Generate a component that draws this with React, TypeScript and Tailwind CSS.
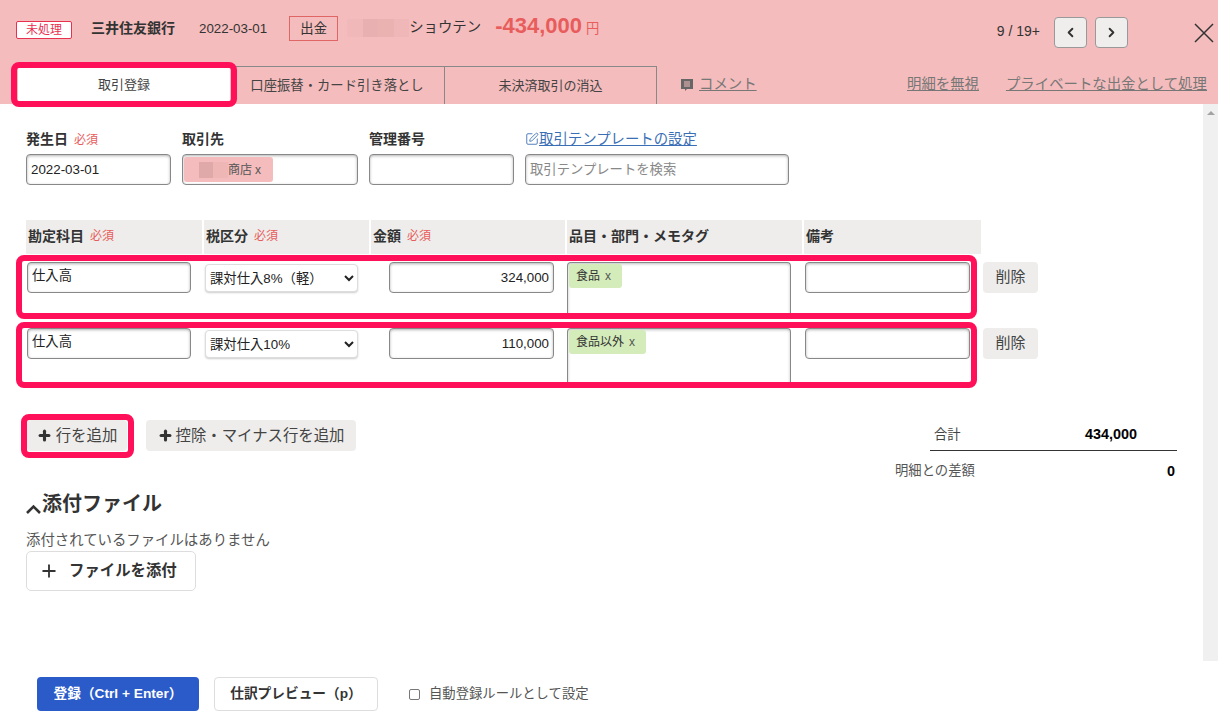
import { ChevronLeft, ChevronRight, Plus, SquarePen } from "lucide-react";

const font = '"Liberation Sans", "Noto Sans CJK JP", sans-serif';

const field =
  "h-[31px] rounded-[4px] border border-[#888] bg-white px-[4px] text-[13.33px] text-[#222] shadow-[inset_0_1px_3px_rgba(0,0,0,0.3)] outline-none";

function Required() {
  return <span className="ml-[6px] text-[12px] font-normal text-[#e85c5c]">必須</span>;
}

function Highlight({ className }: { className: string }) {
  return (
    <div
      className={`pointer-events-none absolute rounded-[8px] border-[6px] border-[#ff1059] ${className}`}
    />
  );
}

function Mosaic({ colors, width, height }: { colors: string[]; width: number; height: number }) {
  return (
    <span className="flex shrink-0" style={{ width, height }}>
      {colors.map((c, i) => (
        <span key={i} className="flex-1" style={{ backgroundColor: c }} />
      ))}
    </span>
  );
}

function Header() {
  return (
    <div className="h-[104px] shrink-0 bg-[#f4bcbc] text-[#333]">
      <div className="flex h-[66px] items-start">
        <div className="ml-[16px] mt-[21px] flex h-[18px] w-[56px] items-center justify-center rounded-[2px] border border-[#e8304f] bg-white text-[12px] text-[#e8304f]">
          未処理
        </div>
        <div className="ml-[19px] mt-[18px] text-[14px] font-bold leading-[20px] text-[#333]">三井住友銀行</div>
        <div className="ml-[24px] mt-[20px] text-[13.33px] leading-[17px]">2022-03-01</div>
        <div className="ml-[22px] mt-[16px] flex h-[25px] w-[49px] items-center justify-center border border-[#e06666] text-[13.33px]">
          出金
        </div>
        <div className="ml-[9px] mt-[18px] flex h-[20px] items-center">
          <Mosaic colors={["#f0b8b8", "#e8b0b0", "#ebb2b2", "#efb7b7"]} width={62} height={18} />
          <span className="text-[14.4px]">ショウテン</span>
        </div>
        <div className="ml-[14px] mt-[12px] text-[22px] font-bold leading-[28px] text-[#e85c5c]">-434,000</div>
        <div className="ml-[4px] mt-[20px] text-[13.33px] leading-[17px] text-[#e85c5c]">円</div>
        <div className="ml-auto mt-[23px] text-[14px] leading-[17px]">9 / 19+</div>
        <button className="ml-[14px] mt-[17px] flex h-[31px] w-[33px] items-center justify-center rounded-[4px] border border-[#999] bg-[#f0eeec]">
          <ChevronLeft size={15} strokeWidth={3} />
        </button>
        <button className="ml-[8px] mt-[17px] flex h-[31px] w-[33px] items-center justify-center rounded-[4px] border border-[#999] bg-[#f0eeec]">
          <ChevronRight size={15} strokeWidth={3} />
        </button>
        <svg className="ml-[66px] mr-[4px] mt-[23px]" width="20" height="20" viewBox="0 0 20 20">
          <path d="M1 1L19 19M19 1L1 19" stroke="#333" strokeWidth="1.5" fill="none" />
        </svg>
      </div>
      <div className="relative flex h-[38px] items-stretch text-[13.33px] text-[#444]">
        <div className="ml-[18px] flex w-[212px] items-center justify-center bg-white text-[13px]">取引登録</div>
        <div className="flex w-[214px] items-center justify-center border-t border-[#888]">口座振替・カード引き落とし</div>
        <div className="flex w-[213px] items-center justify-center border-x border-t border-[#888] text-[13px]">
          未決済取引の消込
        </div>
        <div className="ml-[24px] flex items-center gap-[6px] text-[#777]">
          <svg width="12" height="12" viewBox="0 0 12 12">
            <path d="M0 0h12v10H6l-2 2v-2H0z" fill="#666" />
            <path d="M3 3h6M3 5h6M3 7h6" stroke="#f4bcbc" strokeWidth="1" />
          </svg>
          <span className="text-[14.4px] underline">コメント</span>
        </div>
        <div className="ml-auto flex items-center gap-[27px] pr-[11px] text-[14.4px] text-[#777] underline">
          <span>明細を無視</span>
          <span>プライベートな出金として処理</span>
        </div>
        <Highlight className="left-[11px] top-[-4px] h-[45px] w-[226px]" />
      </div>
    </div>
  );
}

function TopFields() {
  return (
    <div className="mt-[26px] flex gap-[11px]">
      <div className="w-[145px]">
        <div className="mb-[6px] h-[18px] text-[14px] font-bold leading-[18px]">
          発生日
          <Required />
        </div>
        <input className={`${field} w-full`} defaultValue="2022-03-01" />
      </div>
      <div className="w-[176px]">
        <div className="mb-[6px] h-[18px] text-[14px] font-bold leading-[18px]">取引先</div>
        <div className={`${field} flex w-full items-center !px-[1px]`}>
          <div className="flex h-[25px] w-[89px] items-center rounded-[3px] bg-[#f4bcbc] text-[12px] text-[#555]">
            <Mosaic colors={["#f4bcbc", "#dfa9a9", "#efb6b6"]} width={44} height={16} />
            <span>商店</span>
            <span className="ml-[3px]">x</span>
          </div>
        </div>
      </div>
      <div className="w-[145px]">
        <div className="mb-[6px] h-[18px] text-[14px] font-bold leading-[18px]">管理番号</div>
        <input className={`${field} w-full`} />
      </div>
      <div className="w-[264px]">
        <div className="mb-[6px] flex h-[18px] items-center text-[14.4px] leading-[18px] text-[#3b6fb5] underline">
          <SquarePen size={14} strokeWidth={1.5} />
          取引テンプレートの設定
        </div>
        <input className={`${field} w-full placeholder:text-[#888]`} placeholder="取引テンプレートを検索" />
      </div>
    </div>
  );
}

const headers = [
  { label: "勘定科目", width: "w-[176px]", required: true },
  { label: "税区分", width: "w-[165px]", required: true },
  { label: "金額", width: "w-[194px]", required: true },
  { label: "品目・部門・メモタグ", width: "w-[235px]", required: false },
  { label: "備考", width: "w-[177px]", required: false },
];

function Row({ tax, amount, tag, first }: { tax: string; amount: string; tag: string; first: boolean }) {
  return (
    <div className="relative flex h-[66px] items-start pl-[1px] pt-[6px]">
      <input className={`${field} w-[164px] pb-[6px]`} defaultValue="仕入高" />
      <select
        className="ml-[14px] mt-[2px] h-[28px] w-[153px] rounded-[4px] border border-[#ddd] bg-white text-[13.33px] text-[#222] shadow-[0_1px_2px_rgba(0,0,0,0.2)]"
        defaultValue={tax}
      >
        <option>{tax}</option>
      </select>
      <input className={`${field} ml-[31px] w-[165px] text-right`} defaultValue={amount} />
      <div className="ml-[13px] h-[56px] w-[224px] rounded-t-[4px] border border-b-0 border-[#888] bg-white pl-[1px] pt-[1px] shadow-[inset_0_1px_3px_rgba(0,0,0,0.25)]">
        <div className="flex h-[24px] w-fit items-center rounded-[3px] bg-[#d3ecba] pl-[7px] pr-[11px] text-[12px] text-[#555]">
          <span className="text-[#333]">{tag}</span>
          <span className="ml-[5px]">x</span>
        </div>
      </div>
      <input className={`${field} ml-[14px] w-[165px]`} />
      <button className="ml-[13px] h-[31px] w-[55px] rounded-[4px] bg-[#eeedeb] text-[15px] text-[#444]">削除</button>
      <Highlight className={`left-[-10px] w-[961px] ${first ? "top-[-1px] h-[64px]" : "top-0 h-[66px]"}`} />
    </div>
  );
}

function Table() {
  return (
    <div className="mt-[35px]">
      <div className="flex gap-[2px]">
        {headers.map((h) => (
          <div
            key={h.label}
            className={`flex h-[34px] items-center bg-[#eeedeb] pb-[2px] pl-[2px] text-[14px] font-bold ${h.width}`}
          >
            {h.label}
            {h.required && <Required />}
          </div>
        ))}
      </div>
      <div className="mt-[2px]">
        <Row tax="課対仕入8%（軽）" amount="324,000" tag="食品" first />
        <Row tax="課対仕入10%" amount="110,000" tag="食品以外" first={false} />
      </div>
    </div>
  );
}

function AddRow() {
  return (
    <div className="mt-[32px] flex h-[70px] items-start pr-[27px]">
      <div className="relative ml-[1px]">
        <button className="flex h-[31px] w-[100px] items-center justify-center gap-[4px] rounded-[4px] bg-[#eeedeb] text-[15.4px] text-[#444]">
          <Plus className="shrink-0 text-[#333]" size={15} strokeWidth={5} />
          行を追加
        </button>
        <Highlight className="left-[-6px] top-[-6px] h-[44px] w-[113px]" />
      </div>
      <button className="ml-[19px] flex h-[31px] w-[210px] items-center justify-center gap-[3px] rounded-[4px] bg-[#eeedeb] text-[15.4px] text-[#444]">
        <Plus className="shrink-0 text-[#333]" size={15} strokeWidth={5} />
        控除・マイナス行を追加
      </button>
      <div className="ml-auto mr-[-1px] w-[282px]">
        <div className="ml-[35px] flex h-[31px] items-center border-b border-[#333] pl-[4px] pr-[40px] text-[13.33px]">
          <span className="text-[#444]">合計</span>
          <span className="ml-auto text-[14.4px] font-bold text-black">434,000</span>
        </div>
        <div className="mt-[11px] flex items-center pr-[2px] text-[13.33px] leading-[18px]">
          <span className="text-[#555]">明細との差額</span>
          <span className="ml-auto text-[14.4px] font-bold text-black">0</span>
        </div>
      </div>
    </div>
  );
}

function Attachments() {
  return (
    <div>
      <div className="flex h-[28px] items-center text-[20px] font-bold text-[#333]">
        <svg className="mt-[10px] shrink-0" width="16" height="10" viewBox="0 0 16 10">
          <path d="M1 9L7.5 2.5L14 9" stroke="#333" strokeWidth="2.6" fill="none" />
        </svg>
        添付ファイル
      </div>
      <div className="mt-[13px] text-[14.4px] leading-[18px] text-[#555]">添付されているファイルはありません</div>
      <button className="mt-[2px] flex h-[40px] w-[170px] items-center rounded-[5px] border border-[#ddd] bg-white pl-[12px] text-[15.4px] font-bold text-[#333]">
        <Plus className="mr-[10px] shrink-0" size={20} strokeWidth={2.2} />
        ファイルを添付
      </button>
    </div>
  );
}

function Scrollbar() {
  return (
    <div className="flex w-[15px] shrink-0 justify-center bg-[#f0f0f0] pt-[7px]">
      <div className="h-0 w-0 border-x-[4px] border-b-[4px] border-x-transparent border-b-[#a3a3a3]" />
    </div>
  );
}

function Footer() {
  return (
    <div className="flex items-start pl-[37px] pt-[16px]">
      <button className="h-[34px] w-[162px] rounded-[4px] bg-[#2a5bc9] text-[13.7px] font-bold text-white">
        登録（Ctrl + Enter）
      </button>
      <button className="ml-[15px] h-[34px] w-[164px] rounded-[4px] border border-[#ddd] bg-white text-[13.7px] font-bold text-[#333]">
        仕訳プレビュー（p）
      </button>
      <label className="ml-[31px] flex h-[34px] items-center gap-[9px] text-[13.33px] text-[#555]">
        <span className="h-[11px] w-[11px] rounded-[2px] border border-[#777] bg-white" />
        自動登録ルールとして設定
      </label>
    </div>
  );
}

export default function App() {
  return (
    <div className="flex h-[725px] w-[1218px] flex-col overflow-hidden bg-white text-[#333]" style={{ fontFamily: font }}>
      <Header />
      <div className="flex h-[557px] shrink-0">
        <div className="min-w-0 flex-1 pl-[26px]">
          <TopFields />
          <Table />
          <AddRow />
          <Attachments />
        </div>
        <Scrollbar />
      </div>
      <Footer />
    </div>
  );
}
